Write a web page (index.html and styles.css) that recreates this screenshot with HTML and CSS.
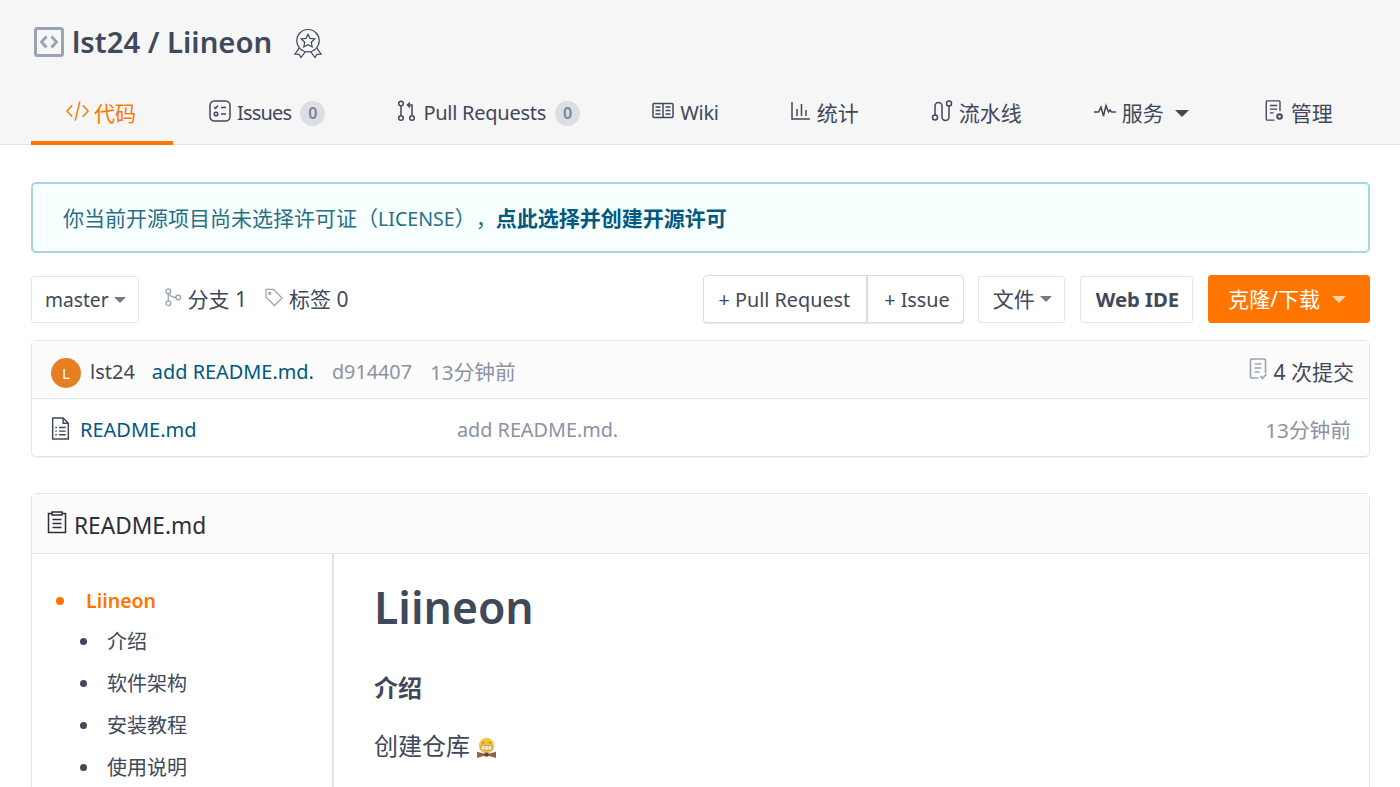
FILE: index.html
```html
<!DOCTYPE html>
<html lang="en">
<head>
    <meta charset="UTF-8">
    <title>lst24 / Liineon</title>
    <link rel="stylesheet" href="styles.css">
</head>
<body>
    <div class="project-header">
        <div class="project-title">
            <svg class="repo-icon" viewBox="0 0 30 30" fill="none" stroke="#9aa2b3"><rect x="1.500" y="1.500" width="27" height="27" rx="2" stroke-width="3"/><path d="M12.500 9.500 7.500 15l5 5.500M17.500 9.500l5 5.500-5 5.500" stroke-width="2.800"/></svg>
            <span class="repo-name">lst24 / Liineon</span>
            <svg class="badge-icon" viewBox="0 0 30 32" fill="none" stroke="#40485b" stroke-width="1.300"><circle cx="15" cy="13" r="12"/><path d="m15 6 2.200 4.600 5 .6-3.700 3.500 1 5L15 17.300l-4.500 2.400 1-5-3.700-3.500 5-.6z"/><path d="M5.500 21 1 27.500l4.500.2 2 3.300 4.500-6M24.500 21l4.500 6.500-4.500.2-2 3.300-4.500-6"/></svg>
        </div>
        <nav class="tabs">
            <a class="tab active"><svg class="tab-icon code-icon" viewBox="0 0 24 22" fill="none" stroke="#ff7500" stroke-width="1.500"><path d="M6.500 5 1 11l5.500 6M17.500 5 23 11l-5.500 6M14.500 1 9.500 21"/></svg>代码</a>
            <a class="tab"><svg class="tab-icon" viewBox="0 0 22 22" fill="none" stroke="#40485b" stroke-width="1.500"><rect x="1" y="1" width="20" height="20" rx="4.500"/><path d="m5 7 1.500 1.500L9 5.500M12 7.500h5M12 14h5"/><circle cx="7" cy="14" r="1.800"/></svg><span class="latin issues-label">Issues</span><span class="count">0</span></a>
            <a class="tab"><svg class="tab-icon narrow-icon" viewBox="0 0 18 22" fill="none" stroke="#40485b" stroke-width="1.500"><circle cx="3.500" cy="3.500" r="2.300"/><circle cx="3.500" cy="18" r="2.300"/><circle cx="14.500" cy="18" r="2.300"/><path d="M3.500 6v9.500M14.500 15.500V5H10M12.500 2.500 10 5l2.500 2.500"/></svg><span class="latin">Pull Requests</span><span class="count">0</span></a>
            <a class="tab"><svg class="tab-icon" viewBox="0 0 22 18" fill="none" stroke="#40485b" stroke-width="1.500"><rect x="1" y="1.500" width="20" height="14" rx="1"/><path d="M11 1.500v14M3.500 5H8.500M3.500 8.500H8.500M3.500 12H8.500M13.500 5h5M13.500 8.500h5M13.500 12h5"/></svg><span class="latin">Wiki</span></a>
            <a class="tab"><svg class="tab-icon narrow-icon" viewBox="0 0 19 20" fill="none" stroke="#40485b" stroke-width="1.500"><path d="M1 1v17h18M6 15V8M10.500 15V3M15 15V9"/></svg>统计</a>
            <a class="tab"><svg class="tab-icon" viewBox="0 0 21 22" fill="none" stroke="#40485b" stroke-width="1.500"><circle cx="3.500" cy="17.500" r="2.500"/><circle cx="17.500" cy="3.500" r="2.500"/><path d="M3.500 15V6a3.500 3.500 0 0 1 7 0v11a3.500 3.500 0 0 0 7 0V6"/></svg>流水线</a>
            <a class="tab"><svg class="tab-icon" viewBox="0 0 22 14" fill="none" stroke="#40485b" stroke-width="1.500"><path d="M0 8h4.500L7 3l2.500 9L12 1.500 14.500 8 16 6l1.500 2H22"/></svg>服务<span class="caret caret-nav"></span></a>
            <a class="tab last"><svg class="tab-icon narrow-icon" viewBox="0 0 20 24" fill="none" stroke="#40485b" stroke-width="1.500"><path d="M10 22H2a1 1 0 0 1-1-1V2a1 1 0 0 1 1-1h13a1 1 0 0 1 1 1v10M5 6h8M5 10h8M5 14h4"/><circle cx="15.500" cy="18" r="2.500" stroke-width="2.200"/></svg>管理</a>
        </nav>
    </div>

    <div class="container">
        <div class="notice">你当前开源项目尚未选择许可证（<span class="notice-latin">LICENSE</span>），<a class="notice-link">点此选择并创建开源许可</a></div>

        <div class="toolbar">
            <div class="btn branch">master<span class="caret"></span></div>
            <div class="stat"><svg class="stat-icon" viewBox="0 0 18 20" fill="none" stroke="#9aa2b3" stroke-width="1.400"><circle cx="4" cy="3.500" r="2.500"/><circle cx="4" cy="16" r="2.500"/><circle cx="14.500" cy="10" r="2.500"/><path d="M4 6v7.500M5.500 6c.5 3 3 4 6.500 4"/></svg>分支 1</div>
            <div class="stat"><svg class="stat-icon" viewBox="0 0 19 19" fill="none" stroke="#9aa2b3" stroke-width="1.300"><path d="M1 1h8l9 9-8 8-9-9z"/><circle cx="5" cy="5" r="1.200"/></svg>标签 0</div>
            <div class="spacer"></div>
            <div class="btn-group">
                <div class="group-item">+ Pull Request</div>
                <div class="group-item">+ Issue</div>
            </div>
            <div class="btn file-btn">文件<span class="caret"></span></div>
            <div class="btn ide-btn">Web IDE</div>
            <div class="btn clone-btn">克隆/下载<span class="caret caret-clone"></span></div>
        </div>

        <div class="file-box">
            <div class="commit-row">
                <span class="avatar">L</span>
                <span class="author">lst24</span>
                <a class="commit-msg">add README.md.</a>
                <span class="muted hash">d914407</span>
                <span class="muted commit-time">13分钟前</span>
                <span class="spacer"></span>
                <svg class="commits-icon" viewBox="0 0 18 23" fill="none" stroke="#9aa2b3" stroke-width="1.600"><path d="M9 20H2a1 1 0 0 1-1-1V2a1 1 0 0 1 1-1h13a1 1 0 0 1 1 1v13M5 6h7M5 10h7M5 14h5M11 18l2 2.500 4-4.500"/></svg>
                <span class="commits-count">4 次提交</span>
            </div>
            <div class="file-row">
                <svg class="file-icon" viewBox="0 0 18 22" fill="none" stroke="#40485b" stroke-width="1.400"><path d="M1.500 1h10l5 5v15h-15zM11.500 1v5h5"/><path d="M7.500 10H14M7.500 13.500H14M7.500 17H14M4 10h1.500M4 13.500h1.500M4 17h1.500"/></svg>
                <a class="file-name">README.md</a>
                <span class="muted file-msg">add README.md.</span>
                <span class="muted commit-time">13分钟前</span>
            </div>
        </div>

        <div class="readme">
            <div class="readme-head">
                <svg class="readme-icon" viewBox="0 0 20 23" fill="none" stroke="#2b2f38" stroke-width="1.500"><path d="M5 2.500H1.500v19h17v-19H15M5 1h10v3H5zM5.500 8.500h9M5.500 12.500h9M5.500 16.500h9"/></svg>
                README.md
            </div>
            <div class="readme-body">
                <aside class="toc">
                    <ul class="toc-top">
                        <li class="toc-active">Liineon
                            <ul class="toc-sub">
                                <li>介绍</li>
                                <li>软件架构</li>
                                <li>安装教程</li>
                                <li>使用说明</li>
                            </ul>
                        </li>
                    </ul>
                </aside>
                <article class="markdown">
                    <h1>Liineon</h1>
                    <h3>介绍</h3>
                    <p>创建仓库 <svg class="emoji" viewBox="0 0 20 21"><circle cx="10" cy="8" r="8" fill="#f6c23c"/><path d="M5.500 5.500q1-1.500 2 0M12.500 5.500q1-1.500 2 0" fill="none" stroke="#6b4a18"/><rect x="4" y="8" width="12" height="4.500" rx="2.200" fill="#fff" stroke="#8a6a2a" stroke-width=".6"/><path d="M8 8v4.500M12 8v4.500M4 10.200h12" stroke="#b9a678" stroke-width=".5"/><path d="M0 14.500 8 16.500h4l8-2V21l-7-2.200H7L0 21z" fill="#94614a"/><rect x="8" y="15.500" width="4" height="4" fill="#6e3f2a"/></svg></p>
                </article>
            </div>
        </div>
    </div>
</body>
</html>
```

FILE: styles.css
```css
* {
    box-sizing: border-box;
}
html, body {
    height: 787px;
    overflow: hidden;
}
body {
    margin: 0;
    background: #fff;
    color: #40485b;
    font-family: "Noto Sans", "Noto Sans CJK SC", sans-serif;
    font-size: 20px;
    line-height: 28px;
    text-spacing-trim: space-all;
}
svg {
    display: block;
    flex: none;
}
a {
    text-decoration: none;
}

/* header */
.project-header {
    height: 145px;
    background: #f6f6f6;
    border-bottom: 1px solid #e0e0e0;
    padding: 0 31px;
}
.project-title {
    display: flex;
    align-items: center;
    height: 84px;
    padding-left: 3px;
}
.repo-icon {
    width: 30px;
    height: 30px;
}
.repo-name {
    margin-left: 8px;
    font-size: 29.300px;
    font-weight: 600;
    line-height: 40px;
}
.badge-icon {
    width: 28px;
    height: 31px;
    margin-left: 22px;
    margin-top: 2px;
}
.tabs {
    display: flex;
    height: 61px;
}
.tab {
    display: flex;
    align-items: center;
    height: 61px;
    padding: 0 36px 3px;
    font-size: 21px;
    white-space: nowrap;
}
.tab.active {
    padding: 0 37px 0 35px;
    color: #ff7500;
    border-bottom: 4px solid #ff7500;
}
.tab.last {
    margin-left: 4px;
}
.latin {
    font-size: 20px;
    letter-spacing: -.25px;
}
.issues-label {
    letter-spacing: -.8px;
}
.tab-icon {
    width: 22px;
    height: 22px;
    margin-right: 6px;
    margin-top: -4px;
}
.narrow-icon {
    width: 19px;
    margin-right: 7px;
}
.code-icon {
    width: 23px;
    margin-right: 5px;
}
.count {
    width: 25px;
    height: 25px;
    margin-left: 9px;
    border-radius: 50%;
    background: #dcdee1;
    color: #7583a8;
    font-size: 16px;
    font-weight: 600;
    line-height: 25px;
    text-align: center;
}
.caret {
    width: 0;
    height: 0;
    margin-left: 5px;
    border-left: 6px solid transparent;
    border-right: 6px solid transparent;
    border-top: 6px solid #73788a;
}
.caret-nav {
    margin-left: 11px;
    border-top-color: #40485b;
    border-left-width: 7px;
    border-right-width: 7px;
    border-top-width: 7px;
}
.caret-clone {
    margin-left: 12px;
    border-top-color: #ffd3b0;
    border-left-width: 7px;
    border-right-width: 7px;
    border-top-width: 7px;
}

/* page body */
.container {
    padding: 37px 30px 0 31px;
}
.notice {
    height: 71px;
    padding-left: 30px;
    background: #f8ffff;
    border: 2px solid #a9d5de;
    border-radius: 5px;
    color: #276f86;
    font-size: 21px;
    line-height: 69px;
}
.notice-latin {
    font-size: 19.600px;
}
.notice-link {
    margin-left: -1px;
    color: #005980;
    font-weight: 700;
}

/* toolbar */
.toolbar {
    display: flex;
    align-items: center;
    height: 48px;
    margin-top: 22px;
}
.spacer {
    flex: 1;
}
.btn {
    display: flex;
    align-items: center;
    height: 47px;
    padding: 0 14px;
    background: #fff;
    border: 1px solid #e2e5ea;
    border-radius: 3px;
    font-size: 20px;
}
.branch {
    padding: 2px 12px 0 13px;
    font-size: 19.200px;
}
.stat {
    display: flex;
    align-items: center;
    margin-left: 25px;
    font-size: 21px;
}
.stat + .stat {
    margin-left: 18px;
}
.stat-icon {
    width: 18px;
    height: 19px;
    margin-right: 6px;
    margin-top: -3px;
}
.btn-group {
    display: flex;
    height: 48px;
    background: #fff;
    border: 1px solid #d5dde6;
    border-radius: 4px;
    box-shadow: 0 1px 1px #e2e5ea;
    font-size: 19.800px;
}
.group-item {
    padding: 0 16px 0 15px;
    line-height: 48px;
}
.group-item + .group-item {
    padding: 0 13px 0 16px;
    border-left: 2px solid #d5dde6;
}
.file-btn {
    margin-left: 14px;
    padding: 0 12px 0 14px;
    font-size: 21px;
}
.ide-btn {
    margin-left: 15px;
    padding: 0 13px 0 15px;
    font-size: 20.300px;
    font-weight: 700;
}
.clone-btn {
    margin-left: 15px;
    height: 48px;
    padding: 0 23px 0 19px;
    background: #ff7500;
    border-color: #ff7500;
    color: #fff;
    font-size: 21px;
}

/* file list */
.file-box {
    margin-top: 17px;
    border: 1px solid #e2e5ea;
    border-radius: 5px;
    box-shadow: 0 1px 1px #eceef1;
}
.commit-row {
    display: flex;
    align-items: center;
    height: 58px;
    padding: 4px 15px 0 19px;
    background: #fcfcfc;
    border-bottom: 1px solid #dfe3ec;
}
.avatar {
    width: 30px;
    height: 30px;
    margin-top: 2px;
    border-radius: 50%;
    background: #e67e22;
    color: #fff;
    font-size: 15px;
    line-height: 30px;
    text-align: center;
}
.author {
    margin-left: 9px;
}
.commit-msg {
    margin-left: 17px;
    font-size: 19.900px;
    color: #005980;
}
.muted {
    color: #8c92a4;
}
.hash {
    margin-left: 18px;
    font-size: 19.800px;
}
.commit-time {
    font-size: 20.700px;
}
.hash + .muted {
    margin-left: 18px;
}
.commits-icon {
    width: 19px;
    height: 23px;
    margin-right: 6px;
    margin-top: -4px;
}
.commits-count {
    font-size: 21px;
}
.file-row {
    display: flex;
    align-items: center;
    height: 57px;
    padding: 5px 18px 0 19px;
}
.file-icon {
    width: 19px;
    height: 23px;
    margin-top: -4px;
    margin-right: 10px;
}
.file-name {
    width: 377px;
    color: #005980;
}
.file-msg {
    flex: 1;
    font-size: 19.800px;
}

/* readme */
.readme {
    margin-top: 36px;
    border: 1px solid #e2e5ea;
    border-bottom: 0;
    border-radius: 5px 5px 0 0;
}
.readme-head {
    display: flex;
    align-items: center;
    height: 60px;
    padding: 4px 0 0 15px;
    background: #fcfcfc;
    border-bottom: 1px solid #dfe3ec;
    color: #2b2f38;
    font-size: 22.700px;
}
.readme-icon {
    width: 20px;
    height: 23px;
    margin-right: 7px;
    margin-top: -6px;
}
.readme-body {
    display: flex;
    height: 233px;
}
.toc {
    width: 302px;
    border-right: 2px solid #dfe3ec;
    padding-top: 33px;
}
.toc ul {
    margin: 0;
    list-style: none;
}
.toc-top {
    padding-left: 54px;
}
.toc-active {
    position: relative;
    color: #ff7500;
    font-size: 19.500px;
    font-weight: 600;
}
.toc-active::before {
    content: "";
    position: absolute;
    left: -30px;
    top: 10px;
    width: 8px;
    height: 8px;
    border-radius: 50%;
    background: #ff7500;
}
.toc-sub {
    padding: 0 0 0 21px;
    color: #40485b;
    font-weight: 400;
}
.toc-sub li {
    position: relative;
    margin-top: 14px;
    font-size: 20px;
}
.toc-sub li:first-child {
    margin-top: 13px;
}
.toc-sub li::before {
    content: "";
    position: absolute;
    left: -27px;
    top: 10px;
    width: 7px;
    height: 7px;
    border-radius: 50%;
    background: #40485b;
}
.markdown {
    flex: 1;
    padding: 21px 40px 0;
}
.markdown h1 {
    margin: 0;
    font-size: 44.500px;
    font-weight: 600;
    line-height: 64px;
}
.markdown h3 {
    margin: 31px 0 0;
    font-size: 24px;
    font-weight: 700;
    line-height: 36px;
}
.markdown p {
    display: flex;
    align-items: center;
    gap: 7px;
    margin: 22px 0 0;
    font-size: 24px;
    line-height: 36px;
}
.emoji {
    width: 19px;
    height: 20px;
    margin-top: 3px;
}
```
